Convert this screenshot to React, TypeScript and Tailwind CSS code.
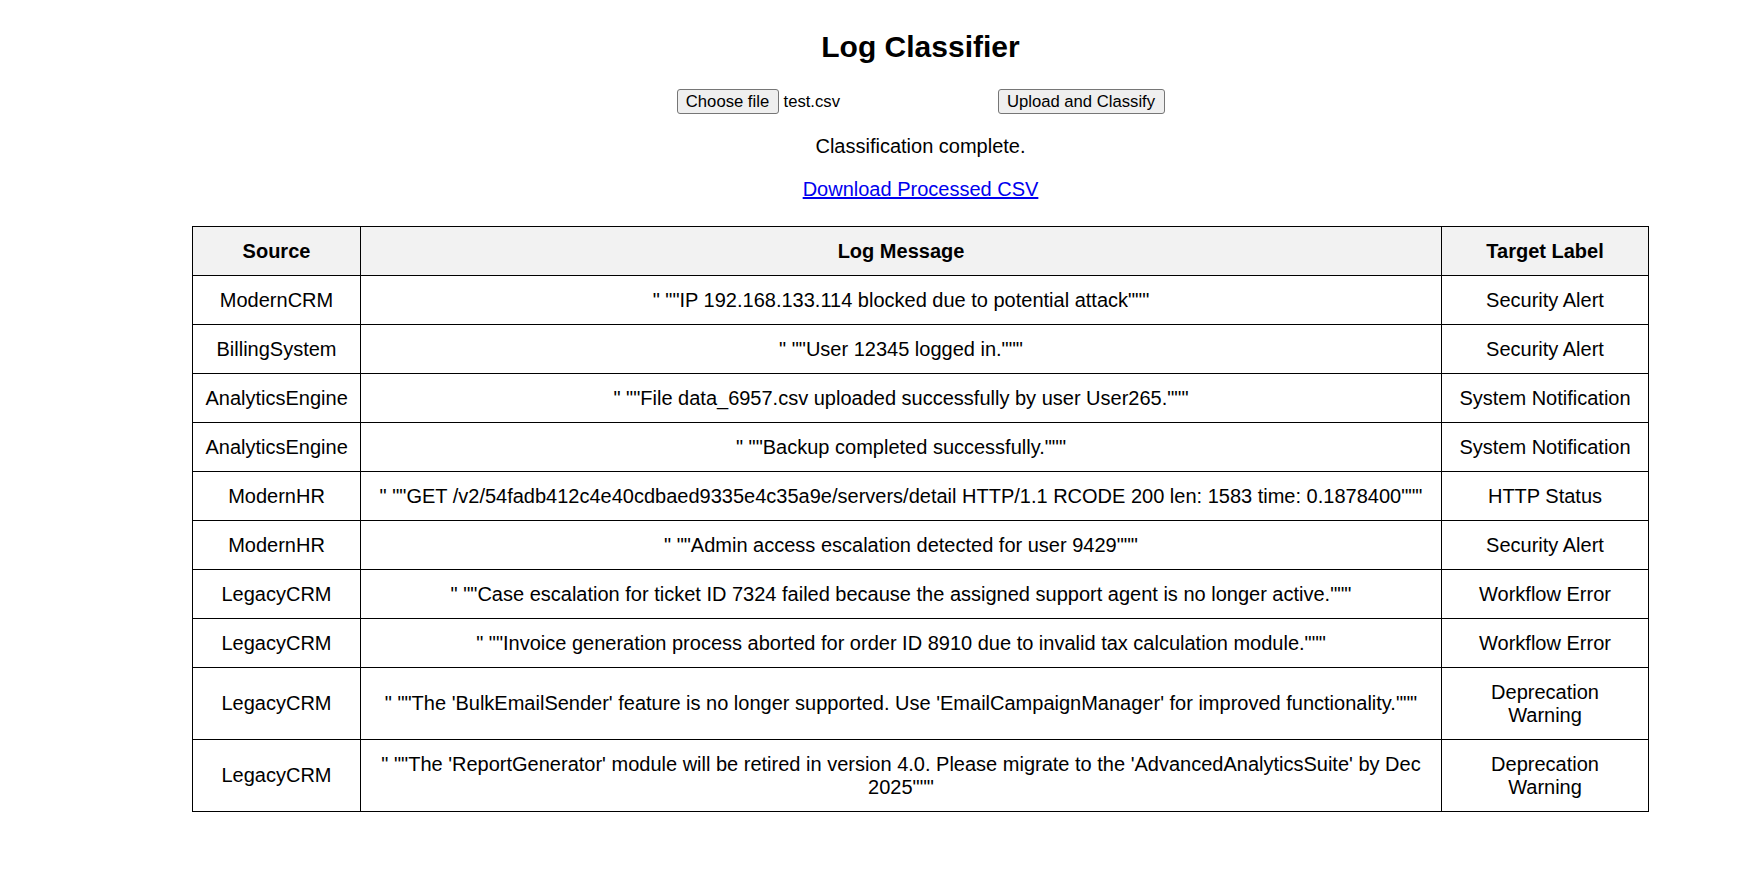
import React from "react";

const rows: [string, string, string][] = [
  ["ModernCRM", '" ""IP 192.168.133.114 blocked due to potential attack"""', "Security Alert"],
  ["BillingSystem", '" ""User 12345 logged in."""', "Security Alert"],
  ["AnalyticsEngine", '" ""File data_6957.csv uploaded successfully by user User265."""', "System Notification"],
  ["AnalyticsEngine", '" ""Backup completed successfully."""', "System Notification"],
  ["ModernHR", '" ""GET /v2/54fadb412c4e40cdbaed9335e4c35a9e/servers/detail HTTP/1.1 RCODE 200 len: 1583 time: 0.1878400"""', "HTTP Status"],
  ["ModernHR", '" ""Admin access escalation detected for user 9429"""', "Security Alert"],
  ["LegacyCRM", '" ""Case escalation for ticket ID 7324 failed because the assigned support agent is no longer active."""', "Workflow Error"],
  ["LegacyCRM", '" ""Invoice generation process aborted for order ID 8910 due to invalid tax calculation module."""', "Workflow Error"],
  ["LegacyCRM", '" ""The \'BulkEmailSender\' feature is no longer supported. Use \'EmailCampaignManager\' for improved functionality."""', "Deprecation Warning"],
  ["LegacyCRM", '" ""The \'ReportGenerator\' module will be retired in version 4.0. Please migrate to the \'AdvancedAnalyticsSuite\' by Dec 2025"""', "Deprecation Warning"],
];

export default function App() {
  return (
    <div className="min-h-screen bg-white text-black font-['Liberation_Sans',Arial,sans-serif] text-[20px]">
      <div className="ml-[80px] w-[1681px] pt-[30px] text-center">
        <h1 className="text-[30px] font-bold leading-[34px]">Log Classifier</h1>
        <div className="mt-[25px] h-[25px] flex justify-center items-center">
          <span className="w-[316px] flex items-center text-left text-[16.67px]">
            <button className="w-[102px] h-[25px] bg-[#efefef] border border-[#767676] rounded-[3px] text-[16.67px] leading-[20px] text-black">
              Choose file
            </button>
            <span className="ml-[5px] leading-[20px]">test.csv</span>
          </span>
          <button className="ml-[5px] w-[167px] h-[25px] bg-[#efefef] border border-[#767676] rounded-[3px] text-[16.67px] leading-[20px] text-black">
            Upload and Classify
          </button>
        </div>
        <p className="mt-[21px] leading-[23px]">Classification complete.</p>
        <p className="mt-[20px] leading-[23px]">
          <a href="#" className="text-[#0000ee] underline">Download Processed CSV</a>
        </p>
        <table className="mt-[25px] mx-auto w-[1456px] table-fixed border-collapse leading-[23px]">
          <colgroup>
            <col className="w-[168px]" />
            <col className="w-[1081px]" />
            <col className="w-[207px]" />
          </colgroup>
          <thead>
            <tr className="bg-[#f2f2f2]">
              <th className="border border-black px-[12.5px] py-[12.5px] font-bold">Source</th>
              <th className="border border-black px-[12.5px] py-[12.5px] font-bold">Log Message</th>
              <th className="border border-black px-[12.5px] py-[12.5px] font-bold">Target Label</th>
            </tr>
          </thead>
          <tbody>
            {rows.map((r, i) => (
              <tr key={i}>
                <td className="border border-black px-[12.5px] py-[12.5px] text-center align-middle">{r[0]}</td>
                <td className="border border-black px-[12.5px] py-[12.5px] text-center align-middle">{r[1]}</td>
                <td className="border border-black px-[12.5px] py-[12.5px] text-center align-middle">{r[2]}</td>
              </tr>
            ))}
          </tbody>
        </table>
      </div>
    </div>
  );
}
